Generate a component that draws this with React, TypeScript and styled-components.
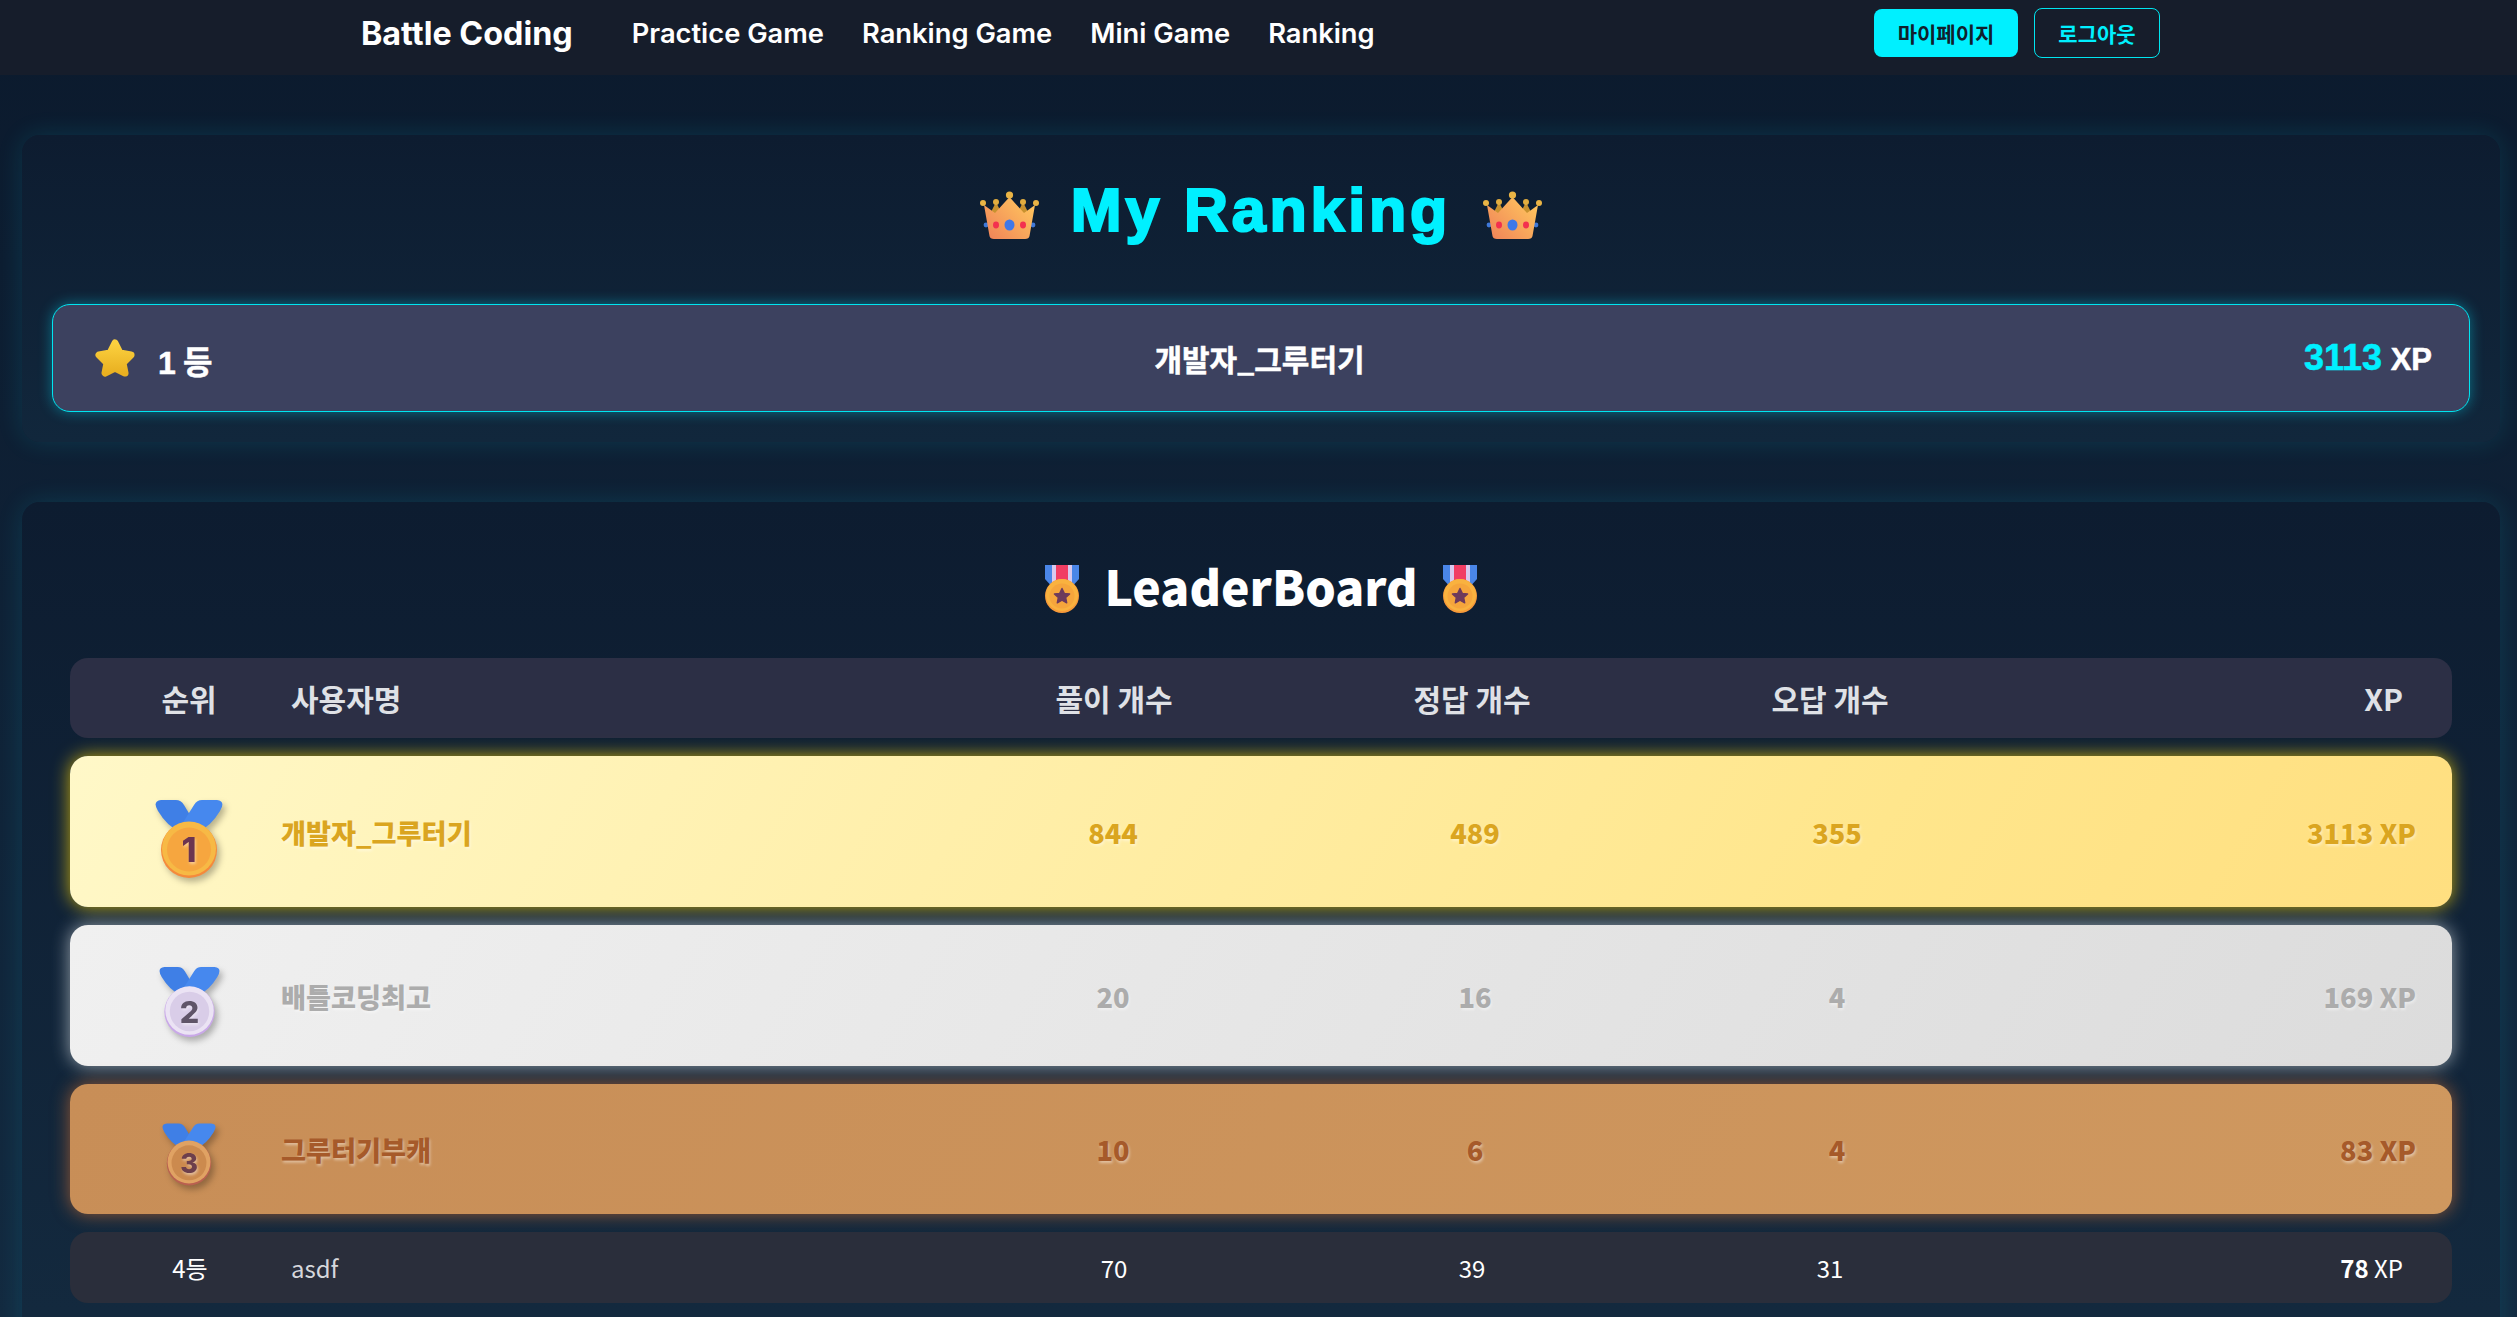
import React from "react";
import styled, { createGlobalStyle, css } from "styled-components";

type Tier = "gold" | "silver" | "bronze";

const TOP_PLAYERS: { tier: Tier; place: number; name: string; solved: number; correct: number; wrong: number; xp: number }[] = [
  { tier: "gold", place: 1, name: "개발자_그루터기", solved: 844, correct: 489, wrong: 355, xp: 3113 },
  { tier: "silver", place: 2, name: "배틀코딩최고", solved: 20, correct: 16, wrong: 4, xp: 169 },
  { tier: "bronze", place: 3, name: "그루터기부캐", solved: 10, correct: 6, wrong: 4, xp: 83 },
];

const MEDAL: any = {
  gold: { w: 68, h: 78, drop: 15, edge: "#f58a3c", rim: "#f7b945", face: "#f6a63f", ink: "#6d3450" },
  silver: { w: 61, h: 70, drop: 13, edge: "#c9a8e8", rim: "#ebe3f4", face: "#d9cde8", ink: "#5f5468" },
  bronze: { w: 54, h: 63, drop: 11, edge: "#b9604f", rim: "#e0a263", face: "#cc8a4e", ink: "#6d3f4c" },
};

function Crown() {
  return (
    <CrownSvg viewBox="0 0 59 49">
      <defs>
        <linearGradient id="crownFill" x1="0" y1="1" x2="1" y2="0.2">
          <stop offset="0" stopColor="#ef8058" />
          <stop offset="1" stopColor="#ffc65e" />
        </linearGradient>
      </defs>
      <path d="M16 12 L23 26 H9 Z M43 12 L50 26 H36 Z" fill="#c8922f" />
      <circle cx="16" cy="12" r="3" fill="#e2ad3f" />
      <circle cx="43" cy="12" r="3" fill="#e2ad3f" />
      <circle cx="6" cy="35" r="2.4" fill="#3f78d8" />
      <circle cx="53" cy="35" r="2.4" fill="#3f78d8" />
      <path d="M4 15 L15 23 L29.5 7 L44 23 L55 15 L49.5 46 Q49 49 45 49 H14 Q10 49 9.5 46 Z" fill="url(#crownFill)" />
      <circle cx="3" cy="13" r="3" fill="#eab445" />
      <circle cx="56" cy="13" r="3" fill="#eab445" />
      <circle cx="29.5" cy="5" r="3.6" fill="#eab445" />
      <ellipse cx="29.5" cy="35" rx="5" ry="5.5" fill="#3f78e8" />
      <ellipse cx="16" cy="35" rx="3" ry="3.4" fill="#f3304f" />
      <ellipse cx="43" cy="35" rx="3" ry="3.4" fill="#f3304f" />
    </CrownSvg>
  );
}

function Star() {
  return (
    <StarSvg viewBox="0 0 40 38">
      <defs>
        <linearGradient id="starFill" x1="0" y1="0" x2="0" y2="1">
          <stop offset="0" stopColor="#fbd13f" />
          <stop offset="1" stopColor="#e9b021" />
        </linearGradient>
      </defs>
      <path
        d="M20 4 L25 14 L36 16 L28 24 L30 34 L20 29 L10 34 L12 24 L4 16 L15 14 Z"
        fill="url(#starFill)"
        stroke="url(#starFill)"
        strokeWidth="7"
        strokeLinejoin="round"
      />
    </StarSvg>
  );
}

function SportsMedal() {
  return (
    <SportsSvg viewBox="0 0 34 48">
      <path d="M0 0 H34 V14 L25 24 H9 L0 14 Z" fill="#4a86e8" />
      <rect x="7" y="0" width="20" height="24" fill="#d8c9ee" />
      <rect x="11" y="0" width="12" height="24" fill="#f13d63" />
      <circle cx="17" cy="31" r="17" fill="#f79a3a" />
      <circle cx="17" cy="30" r="16" fill="#f9b23f" />
      <circle cx="17" cy="31" r="12.5" fill="#f5a53c" />
      <path
        d="M17 23.5 L19.3 28.4 L24.6 29 L20.7 32.6 L21.7 37.8 L17 35.2 L12.3 37.8 L13.3 32.6 L9.4 29 L14.7 28.4 Z"
        fill="#6d3a5c"
        stroke="#6d3a5c"
        strokeWidth="1.4"
        strokeLinejoin="round"
      />
    </SportsSvg>
  );
}

function PlaceMedal({ tier, place }: { tier: Tier; place: number }) {
  const m = MEDAL[tier];
  return (
    <MedalSvg $drop={m.drop} width={m.w} height={m.h} viewBox="0 0 68 78">
      <path d="M6 0 H21 Q26 0 29 5 L38 20 L24 31 Q12 26 3 11 Q-3 1 6 0 Z" fill="#3f7fe6" />
      <path d="M62 0 H47 Q42 0 39 5 L27 24 L44 31 Q56 26 65 11 Q71 1 62 0 Z" fill="#4688ee" />
      <circle cx="34" cy="50" r="28" fill={m.edge} />
      <circle cx="34" cy="48.5" r="27" fill={m.rim} />
      <circle cx="34" cy="49.5" r="22" fill={m.face} />
      <MedalDigit x="34" y="62" fill={m.ink} textAnchor="middle">
        {place}
      </MedalDigit>
    </MedalSvg>
  );
}

export default function App() {
  return (
    <Page>
      <GlobalStyle />
      <Header>
        <HeaderInner>
          <HeaderLeft>
            <Logo>Battle Coding</Logo>
            <Nav>
              <NavLink>Practice Game</NavLink>
              <NavLink>Ranking Game</NavLink>
              <NavLink>Mini Game</NavLink>
              <NavLink>Ranking</NavLink>
            </Nav>
          </HeaderLeft>
          <HeaderRight>
            <MyPageButton>마이페이지</MyPageButton>
            <LogoutButton>로그아웃</LogoutButton>
          </HeaderRight>
        </HeaderInner>
      </Header>

      <Main>
        <MyPanel>
          <MyTitleRow>
            <Crown />
            <MyTitle>My Ranking</MyTitle>
            <Crown />
          </MyTitleRow>
          <MyBox>
            <MyRank>
              <Star />
              <MyRankText>
                <b>1</b> 등
              </MyRankText>
            </MyRank>
            <MyName>개발자_그루터기</MyName>
            <MyXp>
              <MyXpValue>3113</MyXpValue> XP
            </MyXp>
          </MyBox>
        </MyPanel>

        <BoardPanel>
          <BoardTitleRow>
            <SportsMedal />
            <BoardTitle>LeaderBoard</BoardTitle>
            <SportsMedal />
          </BoardTitleRow>

          <HeadRow>
            <CenterCell>순위</CenterCell>
            <NameCell>사용자명</NameCell>
            <CenterCell>풀이 개수</CenterCell>
            <CenterCell>정답 개수</CenterCell>
            <CenterCell>오답 개수</CenterCell>
            <XpCell>XP</XpCell>
          </HeadRow>

          {TOP_PLAYERS.map((p) => (
            <TopRow key={p.place} $tier={p.tier}>
              <CenterCell>
                <PlaceMedal tier={p.tier} place={p.place} />
              </CenterCell>
              <TopName>{p.name}</TopName>
              <CenterCell>{p.solved}</CenterCell>
              <CenterCell>{p.correct}</CenterCell>
              <CenterCell>{p.wrong}</CenterCell>
              <XpCell>{p.xp} XP</XpCell>
            </TopRow>
          ))}

          <PlainRow>
            <CenterCell>4등</CenterCell>
            <PlainName>asdf</PlainName>
            <CenterCell>70</CenterCell>
            <CenterCell>39</CenterCell>
            <CenterCell>31</CenterCell>
            <XpCell>
              <b>78</b> XP
            </XpCell>
          </PlainRow>
        </BoardPanel>
      </Main>
    </Page>
  );
}

const GlobalStyle = createGlobalStyle`
  html, body {
    margin: 0;
    padding: 0;
    height: 100%;
    overflow: hidden;
    background: #0c1a2d;
  }
  * {
    box-sizing: border-box;
  }
`;

const Page = styled.div`
  height: 1317px;
  overflow: hidden;
  background: linear-gradient(180deg, #0b1a2d 0%, #0d1d31 20%, #132a40 100%);
  font-family: "Noto Sans CJK KR", "Noto Sans", sans-serif;
  color: #fff;
`;

const Header = styled.header`
  height: 75px;
  background: #161d2b;
`;

const HeaderInner = styled.div`
  height: 100%;
  padding: 0 357px 9px 361px;
  display: flex;
  align-items: center;
  justify-content: space-between;
`;

const HeaderLeft = styled.div`
  display: flex;
  align-items: center;
  gap: 59px;
`;

const Logo = styled.div`
  font-family: Inter, "Liberation Sans", sans-serif;
  font-size: 32.3px;
  font-weight: 700;
  color: #fff;
  margin-top: 1px;
`;

const Nav = styled.nav`
  display: flex;
  align-items: center;
  gap: 38px;
`;

const NavLink = styled.a`
  font-family: Inter, "Liberation Sans", sans-serif;
  font-size: 27.3px;
  font-weight: 600;
  color: #fff;
  margin-top: 1px;
`;

const HeaderRight = styled.div`
  display: flex;
  align-items: center;
  gap: 16px;
`;

const MyPageButton = styled.button`
  width: 144px;
  height: 48px;
  border: none;
  border-radius: 8px;
  background: #00f0ff;
  color: #10202c;
  font-family: "Noto Sans CJK KR", sans-serif;
  font-size: 21px;
  font-weight: 700;
  padding: 0;
`;

const LogoutButton = styled.button`
  width: 126px;
  height: 50px;
  border: 1px solid #00e5f0;
  border-radius: 8px;
  background: transparent;
  color: #00f0ff;
  font-family: "Noto Sans CJK KR", sans-serif;
  font-size: 21px;
  font-weight: 700;
  padding: 0;
`;

const Main = styled.main`
  padding: 60px 17px 0 22px;
  display: flex;
  flex-direction: column;
  gap: 60px;
`;

const panelBase = css`
  border-radius: 18px;
  box-shadow: 0 0 26px rgba(0, 229, 255, 0.13);
`;

const MyPanel = styled.section`
  ${panelBase}
  height: 307px;
  padding: 0 30px 30px 30px;
  background: linear-gradient(180deg, #0d1c30 0%, #11273c 100%);
`;

const MyTitleRow = styled.div`
  height: 169px;
  display: flex;
  align-items: flex-start;
  justify-content: center;
  gap: 32px;
  padding-top: 55px;
`;

const CrownSvg = styled.svg`
  width: 59px;
  height: 49px;
  flex: none;
`;

const MyTitle = styled.h1`
  margin: -10px 0 0;
  font-family: "Liberation Sans", Arial, sans-serif;
  font-size: 61px;
  font-weight: 700;
  line-height: 60px;
  letter-spacing: 3.8px;
  -webkit-text-stroke: 2.2px #00f0ff;
  color: #00f0ff;
`;

const MyBox = styled.div`
  position: relative;
  height: 108px;
  padding: 0 37px 0 42px;
  display: flex;
  align-items: center;
  justify-content: space-between;
  background: #3c415f;
  border: 1px solid #00e5f0;
  border-radius: 18px;
  box-shadow: 0 0 14px rgba(0, 229, 255, 0.4);
  font-weight: 700;
  -webkit-text-stroke: 0.5px currentColor;
`;

const MyRank = styled.div`
  width: 252px;
  display: flex;
  align-items: center;
  gap: 23px;
`;

const StarSvg = styled.svg`
  width: 40px;
  height: 38px;
  flex: none;
`;

const MyRankText = styled.div`
  font-size: 32px;
  font-weight: 700;
  color: #fff;
  margin-top: 3px;
  b {
    font-family: "Liberation Sans", sans-serif;
  }
`;

const MyName = styled.div`
  font-size: 30px;
  color: #fff;
`;

const MyXp = styled.div`
  width: 260px;
  text-align: right;
  font-family: "Liberation Sans", sans-serif;
  font-size: 31px;
  color: #fff;
`;

const MyXpValue = styled.span`
  font-size: 36px;
  color: #00f0ff;
`;

const BoardPanel = styled.section`
  ${panelBase}
  height: 880px;
  padding: 0 48px 0 48px;
  background: linear-gradient(180deg, #0d1c30 0%, #13293e 92%);
`;

const BoardTitleRow = styled.div`
  height: 156px;
  display: flex;
  align-items: flex-start;
  justify-content: center;
  gap: 25px;
  padding-top: 63px;
`;

const SportsSvg = styled.svg`
  width: 34px;
  height: 48px;
  flex: none;
`;

const BoardTitle = styled.h2`
  margin: -4px 0 0;
  font-size: 48px;
  font-weight: 900;
  line-height: 48px;
  color: #fff;
`;

const HeadRow = styled.div`
  height: 80px;
  margin-bottom: 18px;
  padding: 0 49px 0 65px;
  display: grid;
  grid-template-columns: 108px 692px 358px 358px 358px 1fr;
  align-items: center;
  background: #2c2f45;
  border-radius: 18px;
  font-size: 30px;
  font-weight: 700;
  color: #dfe1e6;
`;

const TIER_STYLE = {
  gold: css`
    height: 151px;
    background: linear-gradient(120deg, #fff8c8 0%, #ffe68c 75%, #ffdf80 100%);
    box-shadow: 0 0 18px rgba(255, 215, 0, 0.75);
    color: #daa520;
  `,
  silver: css`
    height: 141px;
    background: linear-gradient(120deg, #f0f0f0 0%, #dcdcdc 100%);
    box-shadow: 0 0 18px rgba(210, 215, 220, 0.7);
    color: #acacac;
  `,
  bronze: css`
    height: 130px;
    background: linear-gradient(120deg, #c88e57 0%, #cf985f 100%);
    box-shadow: 0 0 18px rgba(205, 110, 50, 0.7);
    color: #a65a2a;
  `,
};

const TopRow = styled.div<{ $tier: Tier }>`
  ${(p) => TIER_STYLE[p.$tier]}
  margin-bottom: 18px;
  padding: 0 36px 0 65px;
  display: grid;
  grid-template-columns: 108px 689px 362px 362px 362px 1fr;
  align-items: center;
  border-radius: 18px;
  font-size: 27.2px;
  font-weight: 900;
  text-shadow: 1px 2px 3px rgba(255, 255, 255, 0.45);
`;

const PlainRow = styled.div`
  height: 71px;
  margin-bottom: 18px;
  padding: 0 49px 0 66px;
  display: grid;
  grid-template-columns: 108px 691px 358px 358px 358px 1fr;
  align-items: center;
  background: #2a2e3b;
  border-radius: 18px;
  font-size: 24px;
  color: #fff;
`;

const CenterCell = styled.div`
  display: flex;
  justify-content: center;
  align-items: center;
`;

const NameCell = styled.div`
  padding-left: 48px;
`;

const TopName = styled.div`
  padding-left: 38px;
`;

const PlainName = styled.div`
  padding-left: 47px;
  color: #d5d7dc;
`;

const XpCell = styled.div`
  text-align: right;
  b {
    font-weight: 700;
  }
`;

const MedalSvg = styled.svg<{ $drop: number }>`
  display: block;
  overflow: visible;
  margin-top: ${(p) => p.$drop}px;
  filter: drop-shadow(3px 4px 3px rgba(0, 0, 0, 0.28));
`;

const MedalDigit = styled.text`
  font-family: Inter, "Liberation Sans", sans-serif;
  font-size: 34px;
  font-weight: 800;
`;
